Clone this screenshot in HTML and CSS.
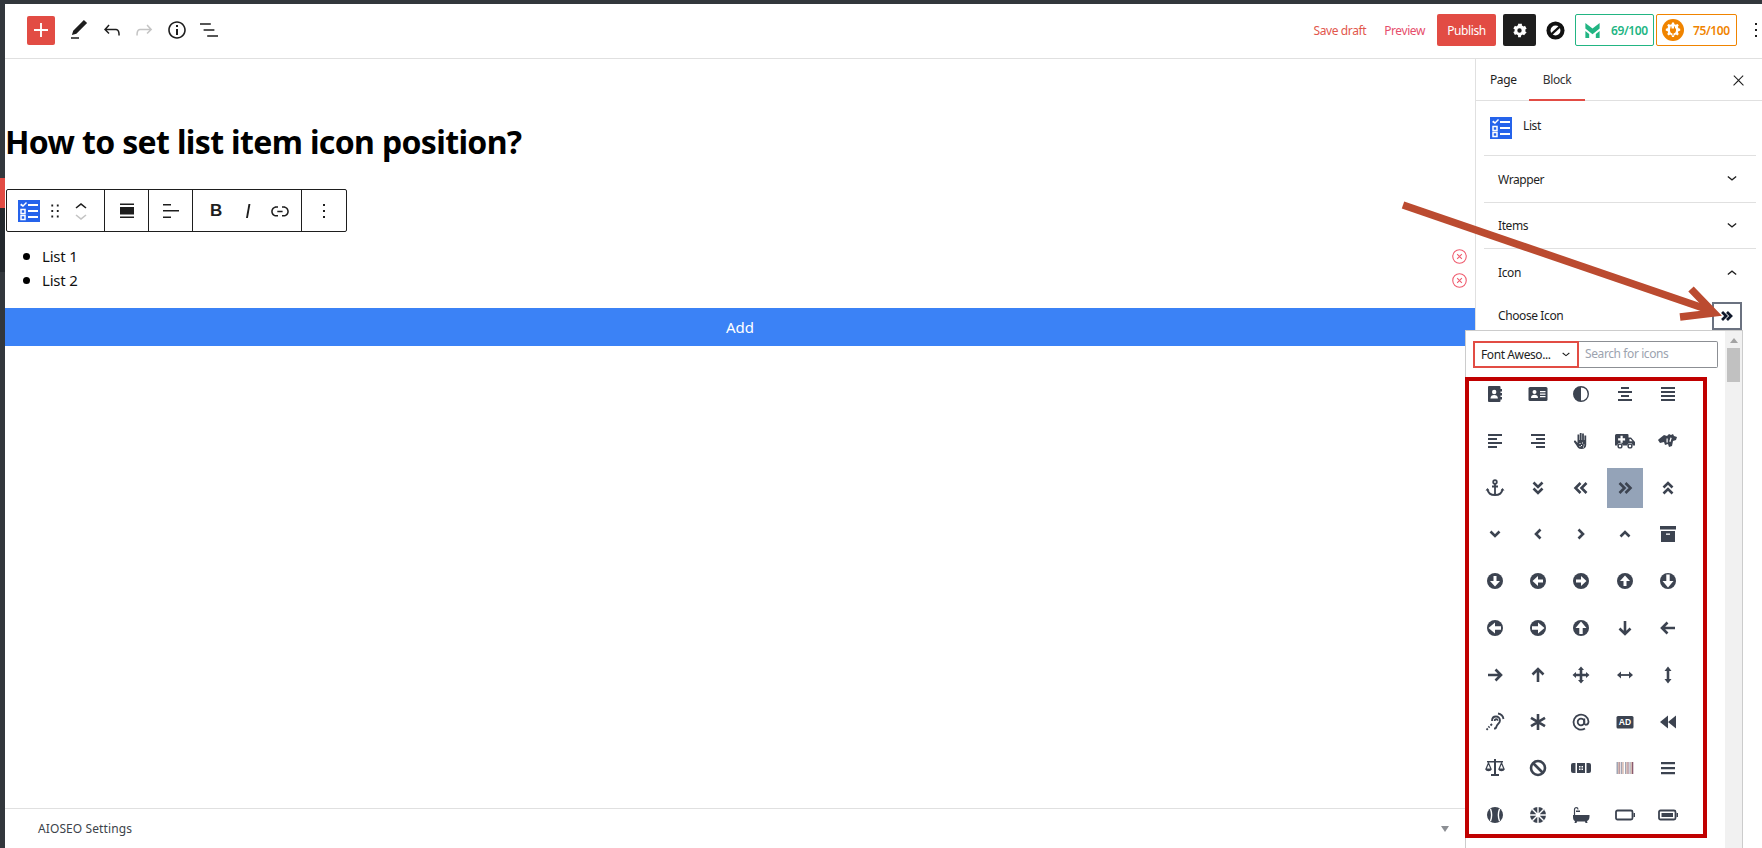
FILE: index.html
```html
<!DOCTYPE html>
<html lang="en">
<head>
    <meta charset="UTF-8">
    <link rel="stylesheet" href="styles.css">
    <title>How to set list item icon position?</title>
</head>
<body>
<div class="app">

    <header class="topbar">
        <div class="tools">
            <button class="add-btn"><svg viewBox="0 0 24 24"><path d="M18 11.200h-5.200V6h-1.600v5.200H6v1.600h5.200V18h1.600v-5.200H18z"/></svg></button>
            <svg class="tool" viewBox="0 0 24 24"><path d="M20.100 5.100L16.900 2 6.200 12.700l-1.300 4.400 4.500-1.300L20.100 5.100zM4 20.800h8v-1.500H4v1.500z"/></svg>
            <svg class="tool" viewBox="0 0 24 24"><path d="M18.300 11.700c-.6-.6-1.400-.9-2.300-.9H6.700l2.900-3.300-1.100-1-4.500 5L8.500 16l1-1-2.700-2.700H16c.5 0 .9.200 1.300.5 1 1 1 3.400 1 4.500v.3h1.500v-.2c0-1.500 0-4.300-1.500-5.700z"/></svg>
            <svg class="tool off" viewBox="0 0 24 24"><path d="M15.600 6.500l-1.100 1 2.900 3.300H8c-.9 0-1.700.3-2.300.9-1.400 1.500-1.400 4.200-1.400 5.600v.2h1.500v-.3c0-1.100 0-3.500 1-4.500.3-.3.7-.5 1.300-.5h9.200L14.500 15l1.100 1.100 4.600-4.600-4.600-5z"/></svg>
            <svg class="tool" viewBox="0 0 24 24"><path d="M12 3.200c-4.800 0-8.800 3.900-8.800 8.800 0 4.800 3.900 8.800 8.800 8.800 4.800 0 8.800-3.900 8.800-8.800 0-4.800-4-8.800-8.800-8.800zm0 16c-4 0-7.200-3.300-7.200-7.200C4.800 8 8 4.800 12 4.800s7.200 3.300 7.200 7.200c0 4-3.200 7.200-7.200 7.200zM11 17h2v-6h-2v6zm0-8h2V7h-2v2z"/></svg>
            <svg class="tool" viewBox="0 0 24 24"><path d="M13.800 5.200H3v1.500h10.800V5.200zm-3.600 12v1.500H21v-1.500H10.200zm7.200-6H6.600v1.500h10.800v-1.500z"/></svg>
        </div>
        <div class="actions">
            <a class="link save">Save draft</a>
            <a class="link preview">Preview</a>
            <button class="publish">Publish</button>
            <button class="settings"><svg viewBox="0 0 20 20"><path d="M17.500 11.900l-1.400-.8a6 6 0 0 0 0-2.200l1.400-.8-1.700-3-1.400.8a6 6 0 0 0-1.900-1.100V3H8.500v1.600a6 6 0 0 0-1.900 1.100l-1.400-.8-1.700 3 1.400.8a6 6 0 0 0 0 2.200l-1.400.8 1.700 3 1.400-.8a6 6 0 0 0 1.900 1.100V17h3v-1.600a6 6 0 0 0 1.900-1.100l1.400.8zM10 12.300a2.300 2.300 0 1 1 0-4.600 2.300 2.300 0 0 1 0 4.600z"/></svg></button>
            <svg class="zero" viewBox="0 0 20 20"><circle cx="10" cy="10" r="9.500"/><circle class="w" cx="10" cy="10" r="5.200"/><path class="zero-cut" d="M5.500 14L14.500 6"/></svg>
            <div class="score green">
                <svg viewBox="0 0 20 20"><path d="M2.500 2L10 8l7.500-6v6L10 14 2.500 8z"/><path d="M2.500 10.500l4 3.200V18h-4zM17.500 10.500l-4 3.200V18h4z"/></svg>
                <span>69/100</span>
            </div>
            <div class="score orange">
                <svg viewBox="0 0 22 22"><circle cx="11" cy="11" r="11"/><path class="w" d="M10 3.500h2l.4 1.700 1.500.6 1.500-.9 1.400 1.400-.9 1.500.6 1.500 1.700.4v2l-1.700.4-.6 1.500.9 1.500-1.400 1.400-1.500-.9-1.500.6-.4 1.700h-2l-.4-1.700-1.500-.6-1.500.9-1.400-1.400.9-1.500-.6-1.500-1.700-.4v-2l1.700-.4.600-1.500-.9-1.500 1.400-1.400 1.500.9 1.500-.6z"/><path d="M8.500 7.500h1v2h2.500v-2h1v2h1v2.500a3 3 0 0 1-2.500 2.500v2h-1v-2a3 3 0 0 1-2.500-2.500V9.500h.5z"/></svg>
                <span>75/100</span>
            </div>
            <svg class="tool more" viewBox="0 0 24 24"><path d="M13 19h-2v-2h2v2zm0-6h-2v-2h2v2zm0-6h-2V5h2v2z"/></svg>
        </div>
    </header>

    <div class="editor">
        <main class="canvas">
            <div class="content">
                <h1 class="post-title">How to set list item icon position?</h1>

                <div class="block-toolbar">
                    <div class="group group-first">
                        <svg class="list-icon" viewBox="0 0 22 22"><rect width="22" height="22"/><path class="w" d="M2 5l1.500-1.500L5 5l3-3 1 1-4 4zM10 4h10v2H10zM10 10h10v2H10zM10 16h10v2H10z"/><path class="ln" d="M3 9.500h4v4H3zM3 15.500h4v4H3z"/></svg>
                        <svg class="tb-icon drag" viewBox="0 0 24 24"><path d="M8 7h2V5H8v2zm0 6h2v-2H8v2zm0 6h2v-2H8v2zm6-14v2h2V5h-2zm0 8h2v-2h-2v2zm0 6h2v-2h-2v2z"/></svg>
                        <div class="mover">
                            <svg viewBox="0 0 24 14"><path d="M6.500 10.400L12 6l5.500 4.400-1 1.200L12 8l-4.500 3.600z"/></svg>
                            <svg class="off" viewBox="0 0 24 14"><path d="M17.500 4.600L12 9 6.500 4.600l1-1.200L12 7l4.500-3.600z"/></svg>
                        </div>
                    </div>
                    <div class="group group-one">
                        <svg class="tb-icon" viewBox="0 0 24 24"><path d="M5 4.500h14V6H5zM5 8h14v7.500H5zM5 17.500h14V19H5z"/></svg>
                    </div>
                    <div class="group group-one">
                        <svg class="tb-icon" viewBox="0 0 24 24"><path d="M4 5h8v1.500H4zM4 11h16v1.500H4zM4 17.500h8V19H4z"/></svg>
                    </div>
                    <div class="group group-format">
                        <b class="fmt">B</b>
                        <svg class="tb-icon" viewBox="0 0 24 24"><path d="M12.500 5L10 19h1.900l2.500-14z"/></svg>
                        <svg class="tb-icon" viewBox="0 0 24 24"><path d="M15.600 7.200H14v1.500h1.600c2 0 3.700 1.700 3.700 3.700s-1.700 3.700-3.700 3.700H14v1.500h1.600c2.800 0 5.200-2.300 5.200-5.200 0-2.900-2.300-5.200-5.200-5.200zM4.700 12.400c0-2 1.700-3.700 3.700-3.700H10V7.200H8.400c-2.900 0-5.200 2.300-5.200 5.200 0 2.900 2.300 5.200 5.200 5.200H10v-1.500H8.400c-2 0-3.700-1.700-3.700-3.700zm4.600.9h5.300v-1.500H9.300v1.500z"/></svg>
                    </div>
                    <div class="group group-one">
                        <svg class="tb-icon" viewBox="0 0 24 24"><path d="M13 19h-2v-2h2v2zm0-6h-2v-2h2v2zm0-6h-2V5h2v2z"/></svg>
                    </div>
                </div>

                <ul class="items">
                    <li><span>List 1</span><svg class="remove" viewBox="0 0 14 14"><circle cx="7" cy="7" r="6.300"/><path d="M4.800 4.800l4.400 4.400M9.200 4.800l-4.400 4.400"/></svg></li>
                    <li><span>List 2</span><svg class="remove" viewBox="0 0 14 14"><circle cx="7" cy="7" r="6.300"/><path d="M4.800 4.800l4.400 4.400M9.200 4.800l-4.400 4.400"/></svg></li>
                </ul>
                <button class="add-item">Add</button>
            </div>
            <footer class="seo-bar">
                <span>AIOSEO Settings</span>
                <i class="caret"></i>
            </footer>
        </main>

        <aside class="sidebar">
            <div class="tabs">
                <span class="tab tab-page">Page</span>
                <span class="tab active">Block</span>
                <svg class="close" viewBox="0 0 24 24"><path d="M13 11.800l6.100-6.300-1-1-6.100 6.200-6.100-6.200-1 1 6.100 6.300-6.500 6.700 1 1 6.500-6.600 6.500 6.600 1-1z"/></svg>
            </div>
            <div class="block-card">
                <svg class="list-icon" viewBox="0 0 22 22"><rect width="22" height="22"/><path class="w" d="M2 5l1.500-1.500L5 5l3-3 1 1-4 4zM10 4h10v2H10zM10 10h10v2H10zM10 16h10v2H10z"/><path class="ln" d="M3 9.500h4v4H3zM3 15.500h4v4H3z"/></svg>
                <span>List</span>
            </div>
            <div class="panel">
                <span>Wrapper</span>
                <svg viewBox="0 0 24 24"><path d="M17.500 9.600L12 14 6.500 9.600l1-1.200L12 12l4.500-3.600z"/></svg>
            </div>
            <div class="panel">
                <span>Items</span>
                <svg viewBox="0 0 24 24"><path d="M17.500 9.600L12 14 6.500 9.600l1-1.200L12 12l4.500-3.600z"/></svg>
            </div>
            <div class="panel panel-open">
                <span>Icon</span>
                <svg viewBox="0 0 24 24"><path d="M6.500 14.400L12 10l5.500 4.400-1 1.200L12 12l-4.500 3.600z"/></svg>
            </div>
            <div class="choose">
                <span>Choose Icon</span>
                <button class="choose-btn"><svg viewBox="0 0 20 20"><path class="st" d="M4.500 5.500l4.500 4.500-4.500 4.500M10 5.500l4.500 4.500-4.500 4.500"/></svg></button>
            </div>
        </aside>
    </div>
</div>

<div class="edge-mark"></div>

<div class="picker">
    <div class="picker-main">
        <div class="picker-head">
            <div class="picker-select"><span>Font Aweso...</span><svg viewBox="0 0 24 24"><path d="M17.500 9.600L12 14 6.500 9.600l1-1.200L12 12l4.500-3.600z"/></svg></div>
            <div class="picker-search">Search for icons</div>
        </div>
        <div class="icon-grid">
            <!-- row 1 -->
            <span class="cell"><svg viewBox="0 0 20 20"><path d="M4 2h10.500a1 1 0 0 1 1 1v14a1 1 0 0 1-1 1H4a1 1 0 0 1-1-1V3a1 1 0 0 1 1-1z"/><path d="M15 5h2v2.500h-2zM15 9h2v2.500h-2zM15 13h2v2.500h-2z"/><circle class="w" cx="9.200" cy="8" r="2.200"/><path class="w" d="M5.500 14.500c0-2.500 1.500-3.500 3.700-3.500s3.700 1 3.700 3.500z"/></svg></span>
            <span class="cell"><svg viewBox="0 0 20 20"><rect x="0.500" y="3" width="19" height="14" rx="1.500"/><circle class="w" cx="6.500" cy="8" r="2"/><path class="w" d="M3 14c0-2.500 1.300-3.300 3.500-3.300S10 11.500 10 14zM12 7h5.500v1.200H12zM12 9.500h5.500v1.200H12zM12 12h5.500v1.200H12z"/></svg></span>
            <span class="cell"><svg viewBox="0 0 20 20"><path d="M10 2a8 8 0 1 0 0 16zM10 2v1.400a6.600 6.600 0 0 1 0 13.200V18a8 8 0 0 0 0-16z"/></svg></span>
            <span class="cell"><svg viewBox="0 0 20 20"><path d="M6 3h8v2H6zM3 7h14v2H3zM6 11h8v2H6zM3 15h14v2H3z"/></svg></span>
            <span class="cell"><svg viewBox="0 0 20 20"><path d="M3 3h14v2H3zM3 7h14v2H3zM3 11h14v2H3zM3 15h14v2H3z"/></svg></span>
            <!-- row 2 -->
            <span class="cell"><svg viewBox="0 0 20 20"><path d="M3 3h14v2H3zM3 7h9v2H3zM3 11h14v2H3zM3 15h9v2H3z"/></svg></span>
            <span class="cell"><svg viewBox="0 0 20 20"><path d="M3 3h14v2H3zM8 7h9v2H8zM3 11h14v2H3zM8 15h9v2H8z"/></svg></span>
            <span class="cell"><svg viewBox="0 0 20 20"><path d="M6.500 3.500h1.800V9h.5V2h1.800v7h.5V2.500h1.800V9h.5V4.500h1.800V14c0 2.500-2 4-4.800 4-3 0-3.700-1.500-5.200-4L3 11c-.5-1 1-2 1.800-1l1.700 2z"/><path class="w" d="M8.500 12h1v1h-1zM11 11.500h1v1h-1zM10 14h1v1h-1zM12.500 13.500h1v1h-1zM8.500 15h1v1h-1zM12 15.500h1v1h-1z"/></svg></span>
            <span class="cell"><svg viewBox="0 0 20 20"><path d="M0 4.500A1.500 1.500 0 0 1 1.500 3h11a1 1 0 0 1 1 1v2.500h2.500l4 4.500v3.500h-2.500a2.500 2.500 0 0 0-5 0h-5a2.500 2.500 0 0 0-5 0H0z"/><circle cx="5" cy="15" r="2.600"/><circle cx="15" cy="15" r="2.600"/><circle class="w" cx="5" cy="15" r="1.200"/><circle class="w" cx="15" cy="15" r="1.200"/><path class="w" d="M5.500 4.800h2.200v2.400h2.400v2.200H7.700v2.400H5.500V9.400H3.100V7.200h2.400zM14.500 8h1l2 2.300h-3z"/></svg></span>
            <span class="cell"><svg viewBox="0 0 20 20"><path d="M1 8l5-4 3 1 2-2 2 1 2-1 1 2 3 1-1 3-3 1-1 5-3 1-1-3-3 1-1-3-4 1-2-3z"/><path class="w" d="M8.500 7.500h1.200v4H8.500zM12.500 6.500l1.200.5-1.200 4-1.200-.5z"/></svg></span>
            <!-- row 3 -->
            <span class="cell"><svg viewBox="0 0 20 20"><circle class="st th" cx="10" cy="4" r="1.800"/><path class="st th" d="M10 6v11M7 8.500h6M2.500 11.500c.5 3.500 3.500 5.500 7.500 5.500s7-2 7.500-5.500"/><path d="M0.500 12.500l2-2.500 2 2.500zM15.500 12.500l2-2.500 2 2.500z"/></svg></span>
            <span class="cell"><svg viewBox="0 0 20 20"><path class="st" d="M5.500 4.500l4.500 4.500 4.500-4.500M5.500 10.500l4.500 4.500 4.500-4.500"/></svg></span>
            <span class="cell"><svg viewBox="0 0 20 20"><path class="st" d="M9.500 5l-5 5 5 5M15.500 5l-5 5 5 5"/></svg></span>
            <span class="cell selected"><svg viewBox="0 0 20 20"><path class="st" d="M4.500 5l5 5-5 5M10.500 5l5 5-5 5"/></svg></span>
            <span class="cell"><svg viewBox="0 0 20 20"><path class="st" d="M5.500 9.500L10 5l4.500 4.500M5.500 15.500L10 11l4.500 4.500"/></svg></span>
            <!-- row 4 -->
            <span class="cell"><svg viewBox="0 0 20 20"><path class="st" d="M5.500 7.500l4.500 4.500 4.500-4.500"/></svg></span>
            <span class="cell"><svg viewBox="0 0 20 20"><path class="st" d="M12.500 5.500L8 10l4.500 4.500"/></svg></span>
            <span class="cell"><svg viewBox="0 0 20 20"><path class="st" d="M7.500 5.500L12 10l-4.500 4.500"/></svg></span>
            <span class="cell"><svg viewBox="0 0 20 20"><path class="st" d="M5.500 12.500L10 8l4.500 4.500"/></svg></span>
            <span class="cell"><svg viewBox="0 0 20 20"><path d="M2 2h16v3.500H2zM3 7h14v11H3z"/><path class="w" d="M8 9.500h4v1.300H8z"/></svg></span>
            <!-- row 5 -->
            <span class="cell"><svg viewBox="0 0 20 20"><circle cx="10" cy="10" r="8"/><path class="w" d="M8.500 5h3v5H15l-5 5.500L5 10h3.500z"/></svg></span>
            <span class="cell"><svg viewBox="0 0 20 20"><circle cx="10" cy="10" r="8"/><path class="w" d="M15 8.500v3h-5V15L4.500 10 10 5v3.500z"/></svg></span>
            <span class="cell"><svg viewBox="0 0 20 20"><circle cx="10" cy="10" r="8"/><path class="w" d="M5 8.500v3h5V15l5.500-5L10 5v3.500z"/></svg></span>
            <span class="cell"><svg viewBox="0 0 20 20"><circle cx="10" cy="10" r="8"/><path class="w" d="M8.500 15h3v-5H15l-5-5.500L5 10h3.500z"/></svg></span>
            <span class="cell"><svg viewBox="0 0 20 20"><circle cx="10" cy="10" r="8"/><path class="w" d="M8.300 3.500h3.400V10h3.800L10 16.500 4.500 10h3.800z"/></svg></span>
            <!-- row 6 -->
            <span class="cell"><svg viewBox="0 0 20 20"><circle cx="10" cy="10" r="8"/><path class="w" d="M16 8.300v3.400h-6V15.500L3.500 10 10 4.500v3.800z"/></svg></span>
            <span class="cell"><svg viewBox="0 0 20 20"><circle cx="10" cy="10" r="8"/><path class="w" d="M4 8.300v3.400h6V15.500l6.500-5.500L10 4.500v3.800z"/></svg></span>
            <span class="cell"><svg viewBox="0 0 20 20"><circle cx="10" cy="10" r="8"/><path class="w" d="M8.300 16h3.400v-6h3.800L10 3.500 4.500 10h3.800z"/></svg></span>
            <span class="cell"><svg viewBox="0 0 20 20"><path class="st" d="M10 3v13M4.500 10.500L10 16l5.500-5.500"/></svg></span>
            <span class="cell"><svg viewBox="0 0 20 20"><path class="st" d="M17 10H4M9.500 4.500L4 10l5.500 5.500"/></svg></span>
            <!-- row 7 -->
            <span class="cell"><svg viewBox="0 0 20 20"><path class="st" d="M3 10h13M10.500 4.500L16 10l-5.500 5.500"/></svg></span>
            <span class="cell"><svg viewBox="0 0 20 20"><path class="st" d="M10 17V4M4.500 9.500L10 4l5.500 5.500"/></svg></span>
            <span class="cell"><svg viewBox="0 0 20 20"><path class="st" d="M10 4v12M4 10h12"/><path d="M10 1.500l3 3.500H7zM10 18.500L13 15H7zM1.500 10L5 7v6zM18.500 10L15 7v6z"/></svg></span>
            <span class="cell"><svg viewBox="0 0 20 20"><path class="st th" d="M5 10h10"/><path d="M2 10l4-3.500v7zM18 10l-4-3.500v7z"/></svg></span>
            <span class="cell"><svg viewBox="0 0 20 20"><path class="st" d="M10 5v10"/><path d="M10 1.500L13.500 6h-7zM10 18.500L13.500 14h-7z"/></svg></span>
            <!-- row 8 -->
            <span class="cell"><svg viewBox="0 0 20 20"><path class="st th" d="M7 9c0-3 1.800-4.500 4-4.500s4 1.700 4 4c0 3-3 3.200-3.500 6-.3 1.500-1.300 2.200-2.500 2.200M9.700 9c0-1 .6-1.800 1.500-1.800s1.500.8 1.500 1.500M13 1.500c3 .4 5 2.500 5.500 5.500"/><path class="st th" d="M7 12l-1.500 1.500M4.500 14.500l-1 1M2.800 16.500l-1.300 1.300"/></svg></span>
            <span class="cell"><svg viewBox="0 0 20 20"><path class="st" d="M10 2v16M3 5.800l14 8.400M17 5.800L3 14.200"/></svg></span>
            <span class="cell"><svg viewBox="0 0 20 20"><circle class="st th" cx="10" cy="10" r="3.300"/><path class="st th" d="M13.300 6.500v4.500c0 2.500 4.200 2.500 4.200-1.500A7.500 7.500 0 1 0 14 16.500"/></svg></span>
            <span class="cell"><svg viewBox="0 0 20 20"><rect x="1.500" y="4" width="17" height="12.500" rx="1.500"/><text class="ad-text" x="10" y="13.300">AD</text></svg></span>
            <span class="cell"><svg viewBox="0 0 20 20"><path d="M10 3.500v13L2 10zM18 3.500v13L10 10z"/></svg></span>
            <!-- row 9 -->
            <span class="cell"><svg viewBox="0 0 20 20"><path d="M9 1h2v2h7v1.500h-7V16h3v2H6v-2h3V4.500H2V3h7z"/><path class="st thin" d="M3.500 5L1 11h5zM16.500 5L14 11h5z"/><path d="M0.500 11h6c0 3-6 3-6 0zM13.500 11h6c0 3-6 3-6 0z"/></svg></span>
            <span class="cell"><svg viewBox="0 0 20 20"><circle class="st" cx="10" cy="10" r="7"/><path class="st" d="M5 5l10 10"/></svg></span>
            <span class="cell"><svg viewBox="0 0 20 20"><rect x="0" y="5" width="20" height="10" rx="2"/><path class="w" d="M4.500 5H6v10H4.500zM14 5h1.500v10H14zM8 8h1.500v1.500H8zM10.500 8H12v1.500h-1.500zM8 10.500h1.500V12H8zM10.500 10.500H12V12h-1.500z"/></svg></span>
            <span class="cell"><svg viewBox="0 0 20 20"><path class="bar1" d="M1.500 4H3v12H1.500zM6 4h1.200v12H6zM10 4h1.200v12H10zM14.500 4h1.200v12h-1.200z"/><path class="bar2" d="M3 4h1.500v12H3zM7.200 4h1.500v12H7.200zM11.200 4h1.500v12h-1.500zM15.700 4h1.300v12h-1.300z"/><path class="bar3" d="M4.500 4h.7v12h-.7zM12.700 4h.8v12h-.8zM17 4h1.300v12H17z"/></svg></span>
            <span class="cell"><svg viewBox="0 0 20 20"><path d="M3 4h14v2.200H3zM3 9h14v2.200H3zM3 14h14v2.200H3z"/></svg></span>
            <!-- row 10 -->
            <span class="cell"><svg viewBox="0 0 20 20"><circle cx="10" cy="10" r="8"/><path class="sw" d="M5.500 4c1.500 4 1.500 8 0 12M14.500 4c-1.500 4-1.500 8 0 12"/></svg></span>
            <span class="cell"><svg viewBox="0 0 20 20"><circle cx="10" cy="10" r="8"/><path class="sw" d="M10 2v16M2 10h16M4.300 4.300l11.400 11.400M15.700 4.300L4.300 15.700"/></svg></span>
            <span class="cell"><svg viewBox="0 0 20 20"><path d="M2 10h16.500v1.500c0 2.500-1 4-2.500 4.500l.5 2h-2l-.5-1.500h-8L5.500 18h-2l.5-2c-1.500-.5-2-2-2-4.500z"/><path class="st thin" d="M3.500 10V4.500c0-2.500 3.500-2.500 3.500 0"/><path d="M5 5.500h4V7H5z"/></svg></span>
            <span class="cell"><svg viewBox="0 0 20 20"><rect class="st th" x="1" y="5.500" width="16.500" height="9" rx="1.500"/><path d="M18.500 8h1.500v4h-1.500z"/></svg></span>
            <span class="cell"><svg viewBox="0 0 20 20"><rect class="st th" x="1" y="5.500" width="16.500" height="9" rx="1.500"/><path d="M18.500 8h1.500v4h-1.500zM3.500 8h11.500v4H3.500z"/></svg></span>
        </div>
    </div>
    <div class="scrollbar">
        <i class="scroll-up"></i>
        <i class="scroll-thumb"></i>
    </div>
</div>

<!-- annotations drawn on the screenshot -->
<div class="red-box"></div>
<svg class="arrow" viewBox="0 0 1762 848">
    <path d="M1403 205L1712 311"/>
    <path d="M1691 289L1714 313L1680 317"/>
</svg>

</body>
</html>
```

FILE: styles.css
```css
* {
    box-sizing: border-box;
}

body {
    margin: 0;
    height: 100vh;
    overflow: hidden;
    font-family: "Noto Sans", "Open Sans", sans-serif;
    font-size: 12px;
    letter-spacing: -0.4px;
    color: #1e1e1e;
    background-color: #fff;
}

button {
    font-family: inherit;
    letter-spacing: inherit;
    border: none;
    padding: 0;
}

svg {
    display: block;
    fill: currentColor;
}

.w {
    fill: #fff;
}

.app {
    display: flex;
    flex-direction: column;
    height: 100vh;
    border-top: 4px solid #32373c;
    border-left: 5px solid #32373c;
}

/* top bar */
.topbar {
    display: flex;
    justify-content: space-between;
    align-items: center;
    height: 55px;
    flex-shrink: 0;
    padding: 0 0 2px 22px;
    border-bottom: 1px solid #e0e0e0;
}

.tools {
    display: flex;
    align-items: center;
    gap: 8.500px;
}

.add-btn {
    width: 28px;
    height: 29px;
    margin-right: 3.500px;
    border-radius: 2px;
    background-color: #e24c44;
    color: #fff;
}

.tool {
    width: 24px;
    height: 24px;
}

.off {
    color: #c4c4c4;
}

.actions {
    display: flex;
    align-items: center;
}

.link {
    font-size: 12px;
}

.save {
    color: #e2574c;
    margin-right: 18px;
}

.preview {
    color: #e64e6c;
    margin-right: 12px;
}

.publish {
    width: 59px;
    height: 32px;
    border-radius: 2px;
    background-color: #e24c44;
    color: #fff;
    font-size: 12px;
}

.settings {
    width: 33px;
    height: 32px;
    margin-left: 7px;
    border-radius: 2px;
    background-color: #1e1e1e;
    color: #fff;
    display: flex;
    align-items: center;
    justify-content: center;
}

.settings svg {
    width: 19px;
    height: 19px;
}

.zero {
    width: 19px;
    height: 19px;
    margin: 0 10px;
    color: #111;
}

.zero-cut {
    fill: none;
    stroke: #111;
    stroke-width: 2.400;
}

.score {
    display: flex;
    align-items: center;
    height: 32px;
    border: 1px solid;
    border-radius: 2px;
    font-size: 12px;
    font-weight: 600;
}

.score.green {
    width: 79px;
    margin-right: 2px;
    color: #22b583;
    padding-left: 7px;
    gap: 9px;
}

.score.green svg {
    width: 19px;
    height: 19px;
}

.score.orange {
    width: 81px;
    color: #f08400;
    padding-left: 5px;
    gap: 9px;
}

.score.orange svg {
    width: 22px;
    height: 22px;
}

.more {
    margin-left: 7px;
    margin-right: -6px;
}

/* editor */
.editor {
    flex: 1;
    display: flex;
    min-height: 0;
}

.canvas {
    flex: 1;
    display: flex;
    flex-direction: column;
}

.content {
    flex: 1;
}

.post-title {
    margin: 0;
    padding-top: 61px;
    font-size: 32px;
    line-height: 44px;
    font-weight: 700;
    letter-spacing: -0.65px;
    color: #000;
}

.block-toolbar {
    display: flex;
    width: 341px;
    height: 43px;
    margin: 25px 0 0 1px;
    border: 1px solid #1e1e1e;
    border-radius: 2px;
    background-color: #fff;
}

.group {
    display: flex;
    align-items: center;
    border-right: 1px solid #1e1e1e;
}

.group:last-child {
    border-right: none;
}

.group-first {
    width: 98px;
    padding-left: 11px;
}

.group-one {
    width: 44px;
    justify-content: center;
}

.group-format {
    width: 109px;
    justify-content: space-between;
    padding: 0 9px 0 11px;
}

.tb-icon {
    width: 24px;
    height: 24px;
}

.list-icon {
    width: 22px;
    height: 22px;
    fill: #2563eb;
    flex-shrink: 0;
}

.list-icon .w {
    fill: #fff;
}

.list-icon .ln {
    fill: none;
    stroke: #fff;
    stroke-width: 1.500;
}

.drag {
    margin-left: 4px;
    width: 22px;
    height: 22px;
}

.mover {
    margin-left: 3px;
    width: 24px;
}

.mover svg {
    width: 24px;
    height: 14px;
}

.fmt {
    width: 24px;
    text-align: center;
    font-family: "Liberation Sans", sans-serif;
    font-size: 17px;
}

.items {
    margin: 12px 0 0;
    padding: 0 0 0 18px;
    list-style: none;
    font-size: 15px;
    line-height: 24px;
    letter-spacing: -0.2px;
    color: #111;
}

.items li {
    display: flex;
    align-items: center;
    height: 24px;
}

.items li::before {
    content: "";
    width: 7px;
    height: 7px;
    margin-right: 12px;
    border-radius: 50%;
    background-color: #000;
}

.remove {
    width: 15px;
    height: 15px;
    margin: 0 8px 0 auto;
    fill: none;
    stroke: #ef5b6e;
    stroke-width: 1;
}

.add-item {
    display: block;
    width: 100%;
    height: 38px;
    margin-top: 16px;
    background-color: #3b82f6;
    color: #fff;
    font-size: 15px;
    letter-spacing: 0;
}

.seo-bar {
    display: flex;
    justify-content: space-between;
    align-items: center;
    height: 40px;
    padding: 0 26px 0 33px;
    border-top: 1px solid #e0e0e0;
    color: #3c434a;
    letter-spacing: 0.1px;
}

.caret {
    width: 0;
    height: 0;
    border-left: 4px solid transparent;
    border-right: 4px solid transparent;
    border-top: 6px solid #8c8f94;
}

/* sidebar */
.sidebar {
    width: 287px;
    flex-shrink: 0;
    border-left: 1px solid #e0e0e0;
}

.tabs {
    display: flex;
    align-items: stretch;
    height: 42px;
    border-bottom: 1px solid #e0e0e0;
    padding-left: 14px;
}

.tab {
    display: flex;
    align-items: center;
}

.tab-page {
    width: 39px;
}

.tab.active {
    width: 56px;
    justify-content: center;
    color: #333;
    border-bottom: 2px solid #e24c44;
    margin-bottom: -1px;
}

.close {
    width: 17px;
    height: 17px;
    margin: 13px 15px 0 auto;
}

.block-card {
    display: flex;
    gap: 11px;
    height: 55px;
    margin: 0 6px 0 8px;
    padding: 16px 0 0 6px;
    border-bottom: 1px solid #e0e0e0;
}

.panel {
    display: flex;
    justify-content: space-between;
    align-items: center;
    height: 46.500px;
    margin: 0 6px 0 8px;
    padding: 1px 14px 0 14px;
    border-bottom: 1px solid #e0e0e0;
}

.panel svg {
    width: 20px;
    height: 20px;
}

.panel-open {
    padding-top: 0;
    border-bottom: none;
}

.choose {
    display: flex;
    justify-content: space-between;
    align-items: center;
    margin: 6px 20px 0 22px;
}

.choose-btn {
    width: 30px;
    height: 28px;
    border: 2px solid #6b7280;
    background-color: #fff;
    color: #0f172a;
    display: flex;
    align-items: center;
    justify-content: center;
}

.choose-btn svg {
    width: 18px;
    height: 18px;
}

.choose-btn .st {
    stroke-width: 3;
}

/* left edge of the window behind the screenshot */
.edge-mark {
    position: absolute;
    left: 0;
    top: 178px;
    width: 5px;
    height: 94px;
    background: linear-gradient(#e24c44 30px, #23282d 30px);
}

/* icon picker */
.picker {
    position: absolute;
    left: 1465px;
    top: 330px;
    width: 278px;
    height: 530px;
    display: flex;
    border: 1px solid #ccc;
    background-color: #fff;
}

.picker-main {
    flex: 1;
}

.picker-head {
    display: flex;
    height: 43px;
    padding: 10px 0 0 7px;
}

.picker-select {
    display: flex;
    align-items: center;
    justify-content: space-between;
    width: 106px;
    height: 27px;
    padding-left: 6px;
    border: 2px solid #e24c44;
    font-size: 12px;
}

.picker-select svg {
    width: 16px;
    height: 16px;
    margin-right: 3px;
}

.picker-search {
    width: 139px;
    height: 27px;
    line-height: 24px;
    padding-left: 6px;
    border: 1px solid #8c8f94;
    border-left: none;
    border-radius: 0 2px 2px 0;
    color: #9ca3af;
    font-size: 12px;
}

.icon-grid {
    display: grid;
    grid-template-columns: repeat(5, 36px);
    grid-auto-rows: 40px;
    gap: 6.800px 7.200px;
    padding-left: 11px;
    color: #3c4350;
}

.cell {
    display: flex;
    align-items: center;
    justify-content: center;
}

.cell svg {
    width: 20px;
    height: 20px;
}

.cell.selected {
    background-color: #94a3b8;
}

.st {
    fill: none;
    stroke: currentColor;
    stroke-width: 2.600;
}

.st.th {
    stroke-width: 1.800;
}

.st.thin {
    stroke-width: 1.200;
}

.sw {
    fill: none;
    stroke: #fff;
    stroke-width: 1.400;
}

.ad-text {
    fill: #fff;
    font-family: "Liberation Sans", sans-serif;
    font-size: 8.500px;
    font-weight: 700;
    letter-spacing: 0;
    text-anchor: middle;
}

.bar1 {
    fill: #a0a5b4;
}

.bar2 {
    fill: #d6b9b0;
}

.bar3 {
    fill: #8a5a70;
}

.scrollbar {
    width: 17px;
    flex-shrink: 0;
    background-color: #f1f1f1;
    padding-top: 7px;
}

.scroll-up {
    display: block;
    width: 0;
    height: 0;
    margin: 0 auto;
    border-left: 4px solid transparent;
    border-right: 4px solid transparent;
    border-bottom: 5px solid #a3a3a3;
}

.scroll-thumb {
    display: block;
    width: 13px;
    height: 34px;
    margin: 5px auto 0;
    background-color: #c1c1c1;
}

/* annotations */
.red-box {
    position: absolute;
    left: 1465px;
    top: 377px;
    width: 242px;
    height: 461px;
    border: 4px solid #c00000;
}

.arrow {
    position: absolute;
    left: 0;
    top: 0;
    width: 1762px;
    height: 848px;
    fill: none;
    stroke: #bb4b30;
    stroke-width: 7.500;
    pointer-events: none;
}
```
